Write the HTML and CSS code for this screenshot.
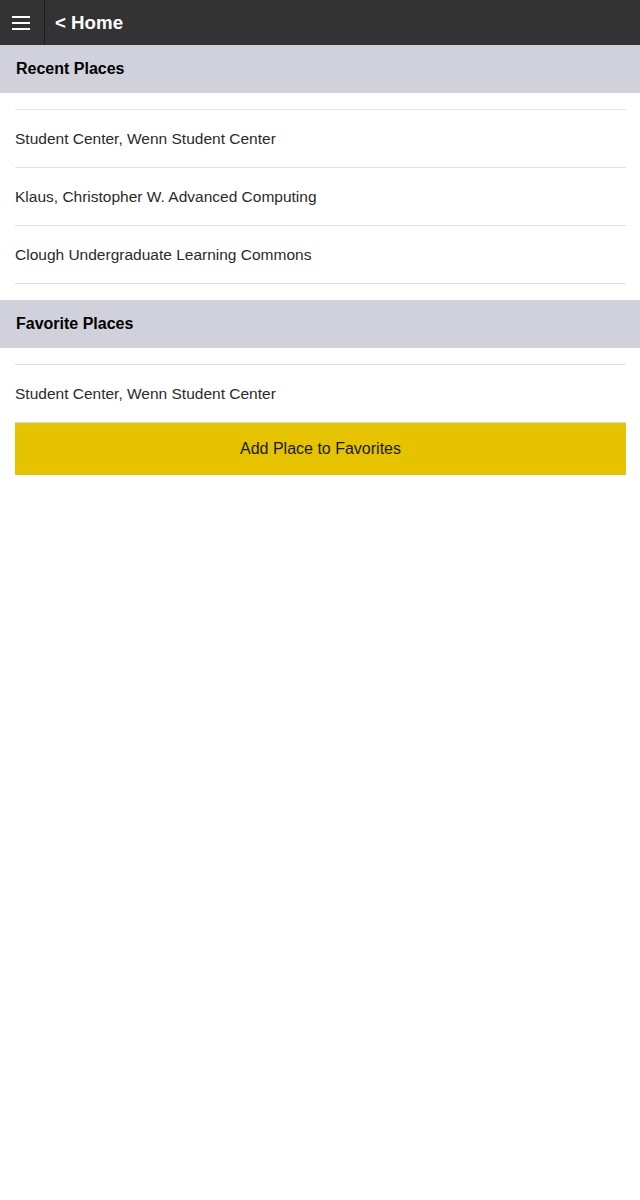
FILE: index.html
```html
<!DOCTYPE html>
<html>
<head>
<meta charset="utf-8">
<link rel="stylesheet" href="styles.css">
</head>
<body>
<header class="topbar">
  <div class="menu-btn">
    <svg width="18" height="14" viewBox="0 0 18 14"><rect x="0" y="0" width="18" height="2" fill="#fff"/><rect x="0" y="6" width="18" height="2" fill="#fff"/><rect x="0" y="12" width="18" height="2" fill="#fff"/></svg>
  </div>
  <div class="back">&lt; Home</div>
</header>
<section>
  <h2 class="section-title">Recent Places</h2>
  <ul class="list">
    <li>Student Center, Wenn Student Center</li>
    <li>Klaus, Christopher W. Advanced Computing</li>
    <li>Clough Undergraduate Learning Commons</li>
  </ul>
</section>
<section>
  <h2 class="section-title">Favorite Places</h2>
  <ul class="list fav">
    <li>Student Center, Wenn Student Center</li>
  </ul>
  <div class="btn-wrap"><button class="add-btn">Add Place to Favorites</button></div>
</section>
</body>
</html>
```
FILE: styles.css
```css
* { box-sizing: border-box; }
body {
  margin: 0;
  font-family: "Liberation Sans", Arial, sans-serif;
  background: #fff;
  color: #222;
}
.topbar {
  display: flex;
  align-items: stretch;
  height: 45px;
  background: #333333;
}
.menu-btn {
  width: 45px;
  border-right: 1px solid #1c1c1c;
  display: flex;
  align-items: center;
  justify-content: flex-start;
  padding-left: 12px;
}
.menu-btn svg { display: block; margin-top: 0; }
.back {
  display: flex;
  align-items: center;
  padding-left: 10px;
  color: #fff;
  font-weight: bold;
  font-size: 18.7px;
}
.section-title {
  margin: 0;
  height: 48px;
  display: flex;
  align-items: center;
  padding-left: 16px;
  background: #d1d1db;
  color: #000;
  font-size: 16px;
  font-weight: bold;
}
.list {
  list-style: none;
  margin: 16px 14px 16px 15px;
  padding: 0;
  border-bottom: 1px solid #e3e3e3;
}
.list li {
  height: 58px;
  border-top: 1px solid #e3e3e3;
  display: flex;
  align-items: center;
  font-size: 15.5px;
  color: #2a2a2a;
}
.list.fav {
  margin-bottom: 0;
  border-bottom: none;
}
.btn-wrap {
  padding: 0 14px 0 15px;
}
.add-btn {
  display: block;
  width: 100%;
  height: 53px;
  border: none;
  border-top: 1px solid #dcdcdc;
  background: #e6c300;
  font-family: "Liberation Sans", Arial, sans-serif;
  font-size: 16px;
  color: #1a1a1a;
  padding: 0;
}
```
